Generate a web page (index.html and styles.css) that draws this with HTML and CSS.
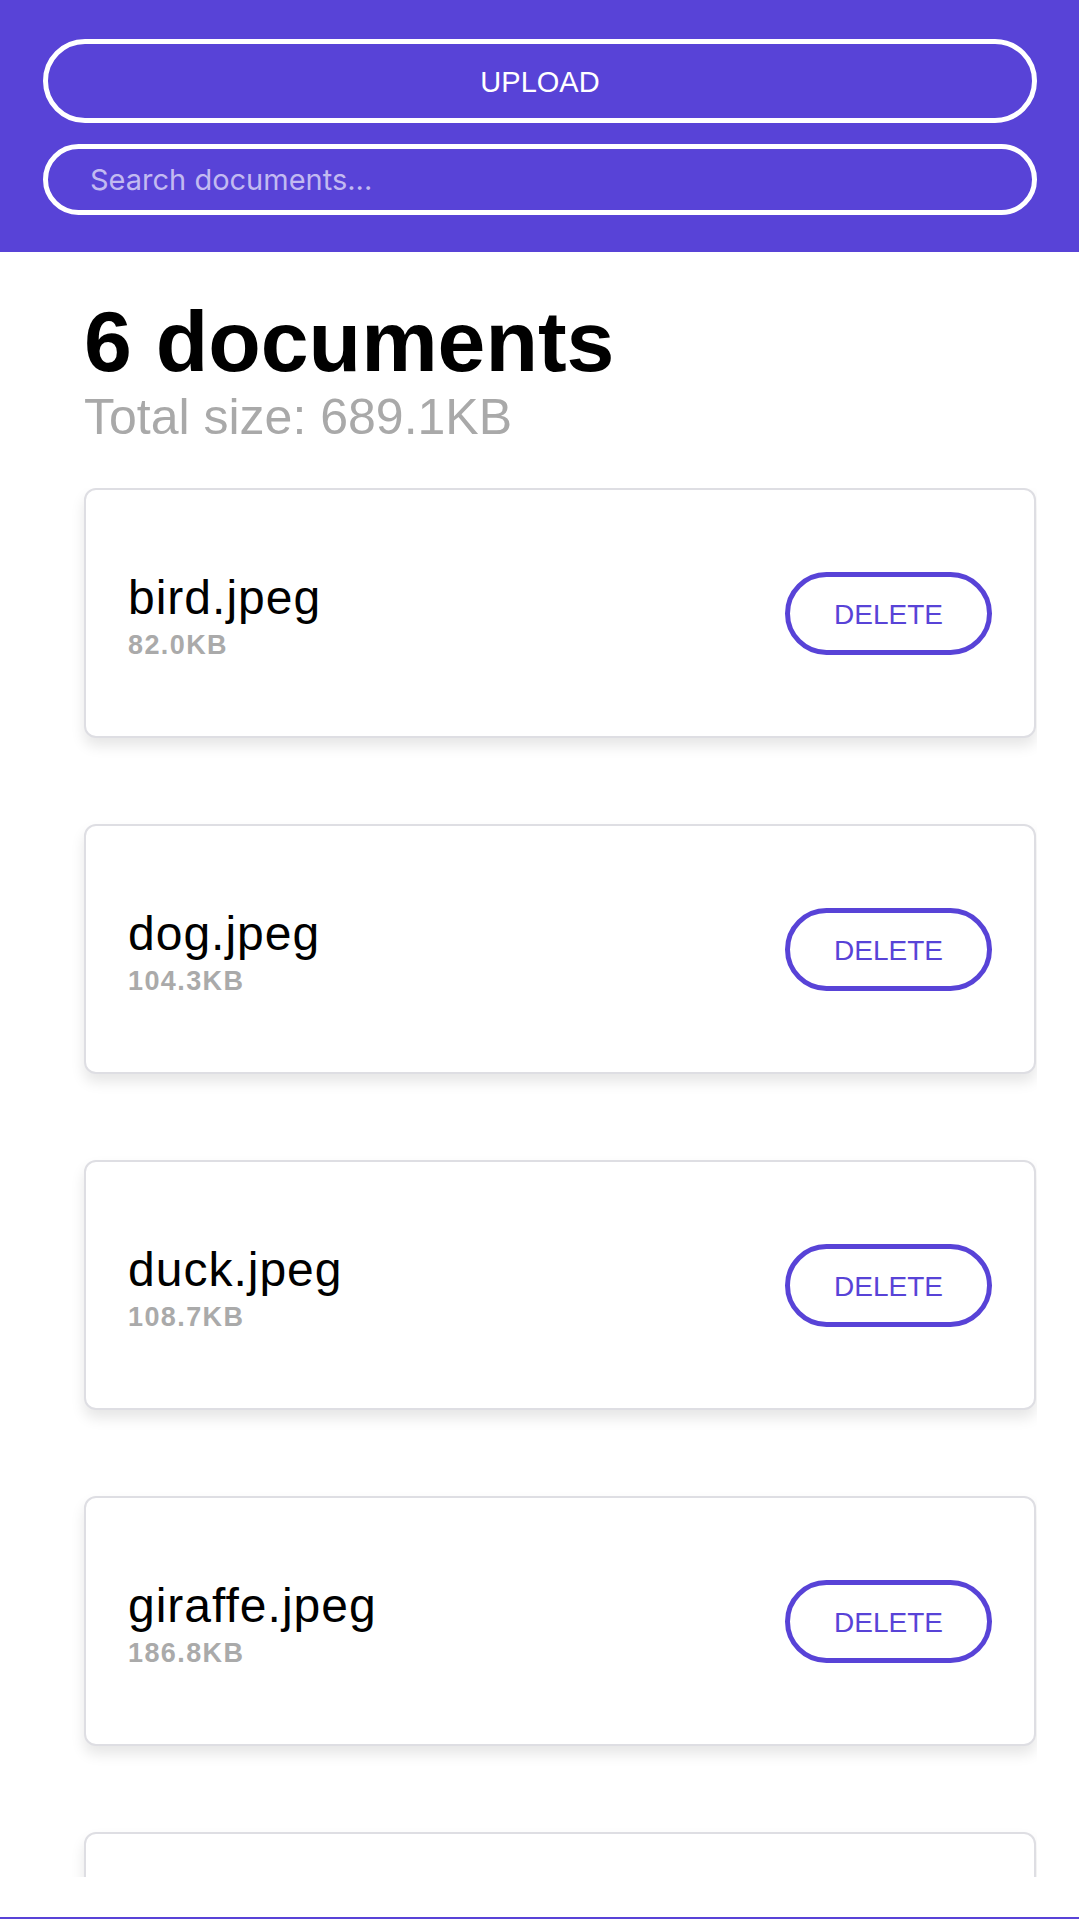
FILE: index.html
```html
<!DOCTYPE html>
<html lang="en">
<head>
<meta charset="utf-8">
<title>Documents</title>
<link rel="stylesheet" href="styles.css">
</head>
<body>
<div class="app">
  <header class="topbar">
    <button class="upload" type="button">UPLOAD</button>
    <input class="search" type="text" placeholder="Search documents...">
  </header>
  <section class="summary">
    <h1 class="count">6 documents</h1>
    <p class="total">Total size: 689.1KB</p>
  </section>
  <div class="list">
    <div class="card">
      <div class="info"><div class="name">bird.jpeg</div><div class="size">82.0KB</div></div>
      <button class="delete" type="button">DELETE</button>
    </div>
    <div class="card">
      <div class="info"><div class="name">dog.jpeg</div><div class="size">104.3KB</div></div>
      <button class="delete" type="button">DELETE</button>
    </div>
    <div class="card">
      <div class="info"><div class="name">duck.jpeg</div><div class="size">108.7KB</div></div>
      <button class="delete" type="button">DELETE</button>
    </div>
    <div class="card">
      <div class="info"><div class="name">giraffe.jpeg</div><div class="size">186.8KB</div></div>
      <button class="delete" type="button">DELETE</button>
    </div>
    <div class="card"></div>
  </div>
  <div class="bottombar"></div>
</div>
</body>
</html>
```

FILE: styles.css
```css
* { box-sizing: border-box; }
html, body { margin: 0; padding: 0; background: #ffffff; }
body { font-family: "Liberation Sans", Arial, sans-serif; }

.app {
  height: 1919px;
  overflow: hidden;
  display: flex;
  flex-direction: column;
}

.topbar {
  background: #5843d7;
  padding: 39px 42px 37px 43px;
  display: flex;
  flex-direction: column;
  gap: 21px;
  flex: none;
}

.upload {
  height: 84px;
  border: 5px solid #ffffff;
  border-radius: 42px;
  background: transparent;
  color: #ffffff;
  font-family: "Liberation Sans", Arial, sans-serif;
  font-size: 29px;
  padding: 2px 0 0 0;
  margin: 0;
}

.search {
  height: 71px;
  border: 5px solid #ffffff;
  border-radius: 36px;
  background: transparent;
  color: #ffffff;
  font-family: Inter, "Liberation Sans", sans-serif;
  font-size: 29px;
  padding: 0 0 0 42px;
  margin: 0;
  outline: none;
  width: 100%;
}
.search::placeholder { color: #c2baf1; }

.summary {
  padding-left: 84px;
  margin-top: 46px;
  flex: none;
}
.count {
  margin: 0;
  font-size: 86px;
  line-height: 86px;
  font-weight: 700;
  color: #000000;
}
.total {
  margin: 8px 0 0 0;
  font-size: 50px;
  line-height: 50px;
  color: #a9a9a9;
}

.list {
  margin: 46px 42px 0 43px;
  padding: 0 1px 0 41px;
  height: 1389px;
  overflow: hidden;
  flex: none;
}

.card {
  height: 250px;
  border: 2px solid #dedee3;
  border-radius: 12px;
  background: #ffffff;
  box-shadow: 0 8px 14px rgba(0, 0, 0, 0.10);
  padding: 0 42px;
  display: flex;
  align-items: center;
  justify-content: space-between;
  margin-bottom: 86px;
}

.name {
  font-size: 48px;
  line-height: 60px;
  letter-spacing: 1px;
  color: #000000;
}
.size {
  margin-top: 3px;
  font-size: 27px;
  line-height: 28px;
  font-weight: 700;
  letter-spacing: 1.4px;
  color: #aaaaaa;
}

.delete {
  width: 207px;
  height: 83px;
  border: 5px solid #5843d7;
  border-radius: 42px;
  background: #ffffff;
  color: #5843d7;
  font-family: "Liberation Sans", Arial, sans-serif;
  font-size: 28px;
  padding: 3px 0 0 0;
  margin: 0;
}

.bottombar {
  margin-top: auto;
  height: 2px;
  background: #5843d7;
  flex: none;
}
```
